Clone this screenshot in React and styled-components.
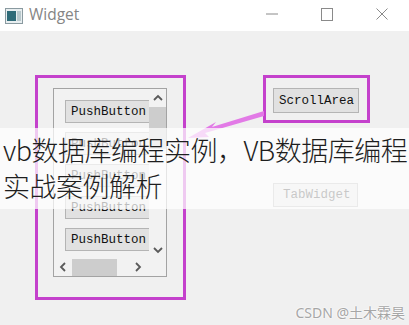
import styled, { createGlobalStyle } from "styled-components";

const GlobalStyle = createGlobalStyle`
  html, body {
    margin: 0;
    padding: 0;
    background: #f0f0f0;
  }
  * {
    box-sizing: border-box;
  }
`;

const Window = styled.div`
  position: relative;
  width: 409px;
  height: 325px;
  display: flex;
  flex-direction: column;
  overflow: hidden;
  background: #f0f0f0;
`;

const TitleBar = styled.div`
  height: 31px;
  flex: none;
  background: #fff;
  display: flex;
  align-items: center;
  padding-left: 5px;
`;

const Title = styled.span`
  margin-left: 6px;
  font-family: "Open Sans", "Noto Sans", sans-serif;
  font-size: 15.5px;
  color: #858585;
  line-height: 1;
  margin-top: -2px;
`;

const Controls = styled.div`
  margin-left: auto;
  display: flex;
  align-items: center;
  height: 100%;
`;

const ControlBtn = styled.div`
  width: 55px;
  height: 100%;
  display: flex;
  align-items: center;
  justify-content: center;
  color: #8a8a8a;
  margin-top: -3px;
`;

const Client = styled.div`
  flex: 1;
  display: flex;
  align-items: flex-start;
  padding: 44px 0 0 35px;
`;

const Annotation = styled.div`
  width: ${({ w }) => w}px;
  height: ${({ h }) => h}px;
  border: 3px solid #c441cc;
  padding: ${({ pad }) => pad};
`;

const ScrollFrame = styled.div`
  width: 114px;
  height: 189px;
  border: 1px solid #a3a3a3;
  background: #f2f2f2;
  display: grid;
  grid-template-columns: 95px 17px;
  grid-template-rows: 169px 18px;
`;

const Viewport = styled.div`
  overflow: hidden;
  padding: 11px 0 0 11px;
  display: flex;
  flex-direction: column;
  gap: 9px;
`;

const PushButton = styled.div`
  flex: none;
  width: ${({ w }) => w || 90}px;
  height: ${({ h }) => h || 23}px;
  border: 1px solid #b4b4b4;
  background: #e1e1e1;
  font-family: "Liberation Mono", "DejaVu Sans Mono", monospace;
  font-size: 12.5px;
  color: ${({ dim }) => (dim ? "#3a3a3a" : "#111")};
  display: flex;
  align-items: center;
  padding-left: ${({ pl }) => pl || 5}px;
  white-space: nowrap;
`;

const VScroll = styled.div`
  display: flex;
  flex-direction: column;
  align-items: center;
  padding-top: 5px;
`;

const VThumb = styled.div`
  width: 17px;
  height: 42px;
  background: #cdcdcd;
  margin-top: 5px;
`;

const DownArrow = styled.div`
  margin-top: auto;
  margin-bottom: 4px;
  display: flex;
`;

const HScroll = styled.div`
  display: flex;
  align-items: center;
  padding-left: 5px;
`;

const HThumb = styled.div`
  width: 45px;
  height: 17px;
  background: #cdcdcd;
  margin-left: 5px;
`;

const RightArrow = styled.div`
  margin-left: auto;
  margin-right: 7px;
  display: flex;
`;

const RightColumn = styled.div`
  margin-left: 77px;
  display: flex;
  flex-direction: column;
`;

const TabSpot = styled.div`
  margin: 60px 0 0 10px;
`;

const ArrowLayer = styled.svg`
  position: absolute;
  left: 0;
  top: 0;
  pointer-events: none;
`;

const Band = styled.div`
  position: absolute;
  left: 0;
  right: 0;
  top: 128px;
  height: 81px;
  background: rgba(255, 255, 255, 0.72);
  padding: 4px 0 0 3px;
  font-family: "Noto Sans CJK SC", "Noto Sans", sans-serif;
  font-weight: 300;
  font-size: 27px;
  letter-spacing: -0.5px;
  line-height: 36px;
  color: #1e1e1e;
  white-space: nowrap;
`;

const Watermark = styled.div`
  position: absolute;
  right: 4px;
  bottom: 3px;
  font-family: "Noto Sans", "Noto Sans CJK SC", sans-serif;
  font-size: 14px;
  color: #a6a6a6;
  text-shadow: 0 0 2px #fff, 0 0 2px #fff;
`;

const Chevron = ({ dir }) => {
  const paths = {
    up: "M1 6 L5 2 L9 6",
    down: "M1 2 L5 6 L9 2",
    left: "M6 1 L2 5 L6 9",
    right: "M2 1 L6 5 L2 9",
  };
  const vertical = dir === "up" || dir === "down";
  return (
    <svg width={vertical ? 10 : 8} height={vertical ? 8 : 10}>
      <path d={paths[dir]} fill="none" stroke="#5a5a5a" strokeWidth="1.8" />
    </svg>
  );
};

export default function App() {
  return (
    <>
      <GlobalStyle />
      <Window>
        <TitleBar>
          <svg width="18" height="16" viewBox="0 0 18 16">
            <rect x="0.5" y="0.5" width="17" height="15" fill="#e8eef0" stroke="#8a9aa0" />
            <rect x="2" y="3" width="9" height="10" fill="#2f6b78" />
            <rect x="12" y="3" width="4" height="10" fill="#b8c8cc" />
          </svg>
          <Title>Widget</Title>
          <Controls>
            <ControlBtn>
              <svg width="12" height="2">
                <line x1="0" y1="1" x2="12" y2="1" stroke="currentColor" strokeWidth="1" />
              </svg>
            </ControlBtn>
            <ControlBtn>
              <svg width="12" height="13">
                <rect x="0.5" y="0.5" width="11" height="12" fill="none" stroke="currentColor" />
              </svg>
            </ControlBtn>
            <ControlBtn>
              <svg width="12" height="12">
                <path d="M0.5 0.5 L11.5 11.5 M11.5 0.5 L0.5 11.5" stroke="currentColor" strokeWidth="1" />
              </svg>
            </ControlBtn>
          </Controls>
        </TitleBar>
        <Client>
          <Annotation w={151} h={225} pad="10px 0 0 15px">
            <ScrollFrame>
              <Viewport>
                {[0, 1, 2, 3, 4].map((i) => (
                  <PushButton key={i}>PushButton</PushButton>
                ))}
              </Viewport>
              <VScroll>
                <Chevron dir="up" />
                <VThumb />
                <DownArrow>
                  <Chevron dir="down" />
                </DownArrow>
              </VScroll>
              <HScroll>
                <Chevron dir="left" />
                <HThumb />
                <RightArrow>
                  <Chevron dir="right" />
                </RightArrow>
              </HScroll>
              <div />
            </ScrollFrame>
          </Annotation>
          <RightColumn>
            <Annotation w={107} h={48} pad="10px 0 0 7px">
              <PushButton w={86} h={25} pl={5}>
                ScrollArea
              </PushButton>
            </Annotation>
            <TabSpot>
              <PushButton w={85} h={24} pl={9} dim>
                TabWidget
              </PushButton>
            </TabSpot>
          </RightColumn>
        </Client>
        <ArrowLayer width="409" height="325">
          <path
            d="M264 111 L212 127 L216 122 L188 138 L209 137 L205 133 L264 116 Z"
            fill="#e27ae6"
          />
        </ArrowLayer>
        <Band>
          vb数据库编程实例，VB数据库编程
          <br />
          实战案例解析
        </Band>
        <Watermark>CSDN @土木霖昊</Watermark>
      </Window>
    </>
  );
}
